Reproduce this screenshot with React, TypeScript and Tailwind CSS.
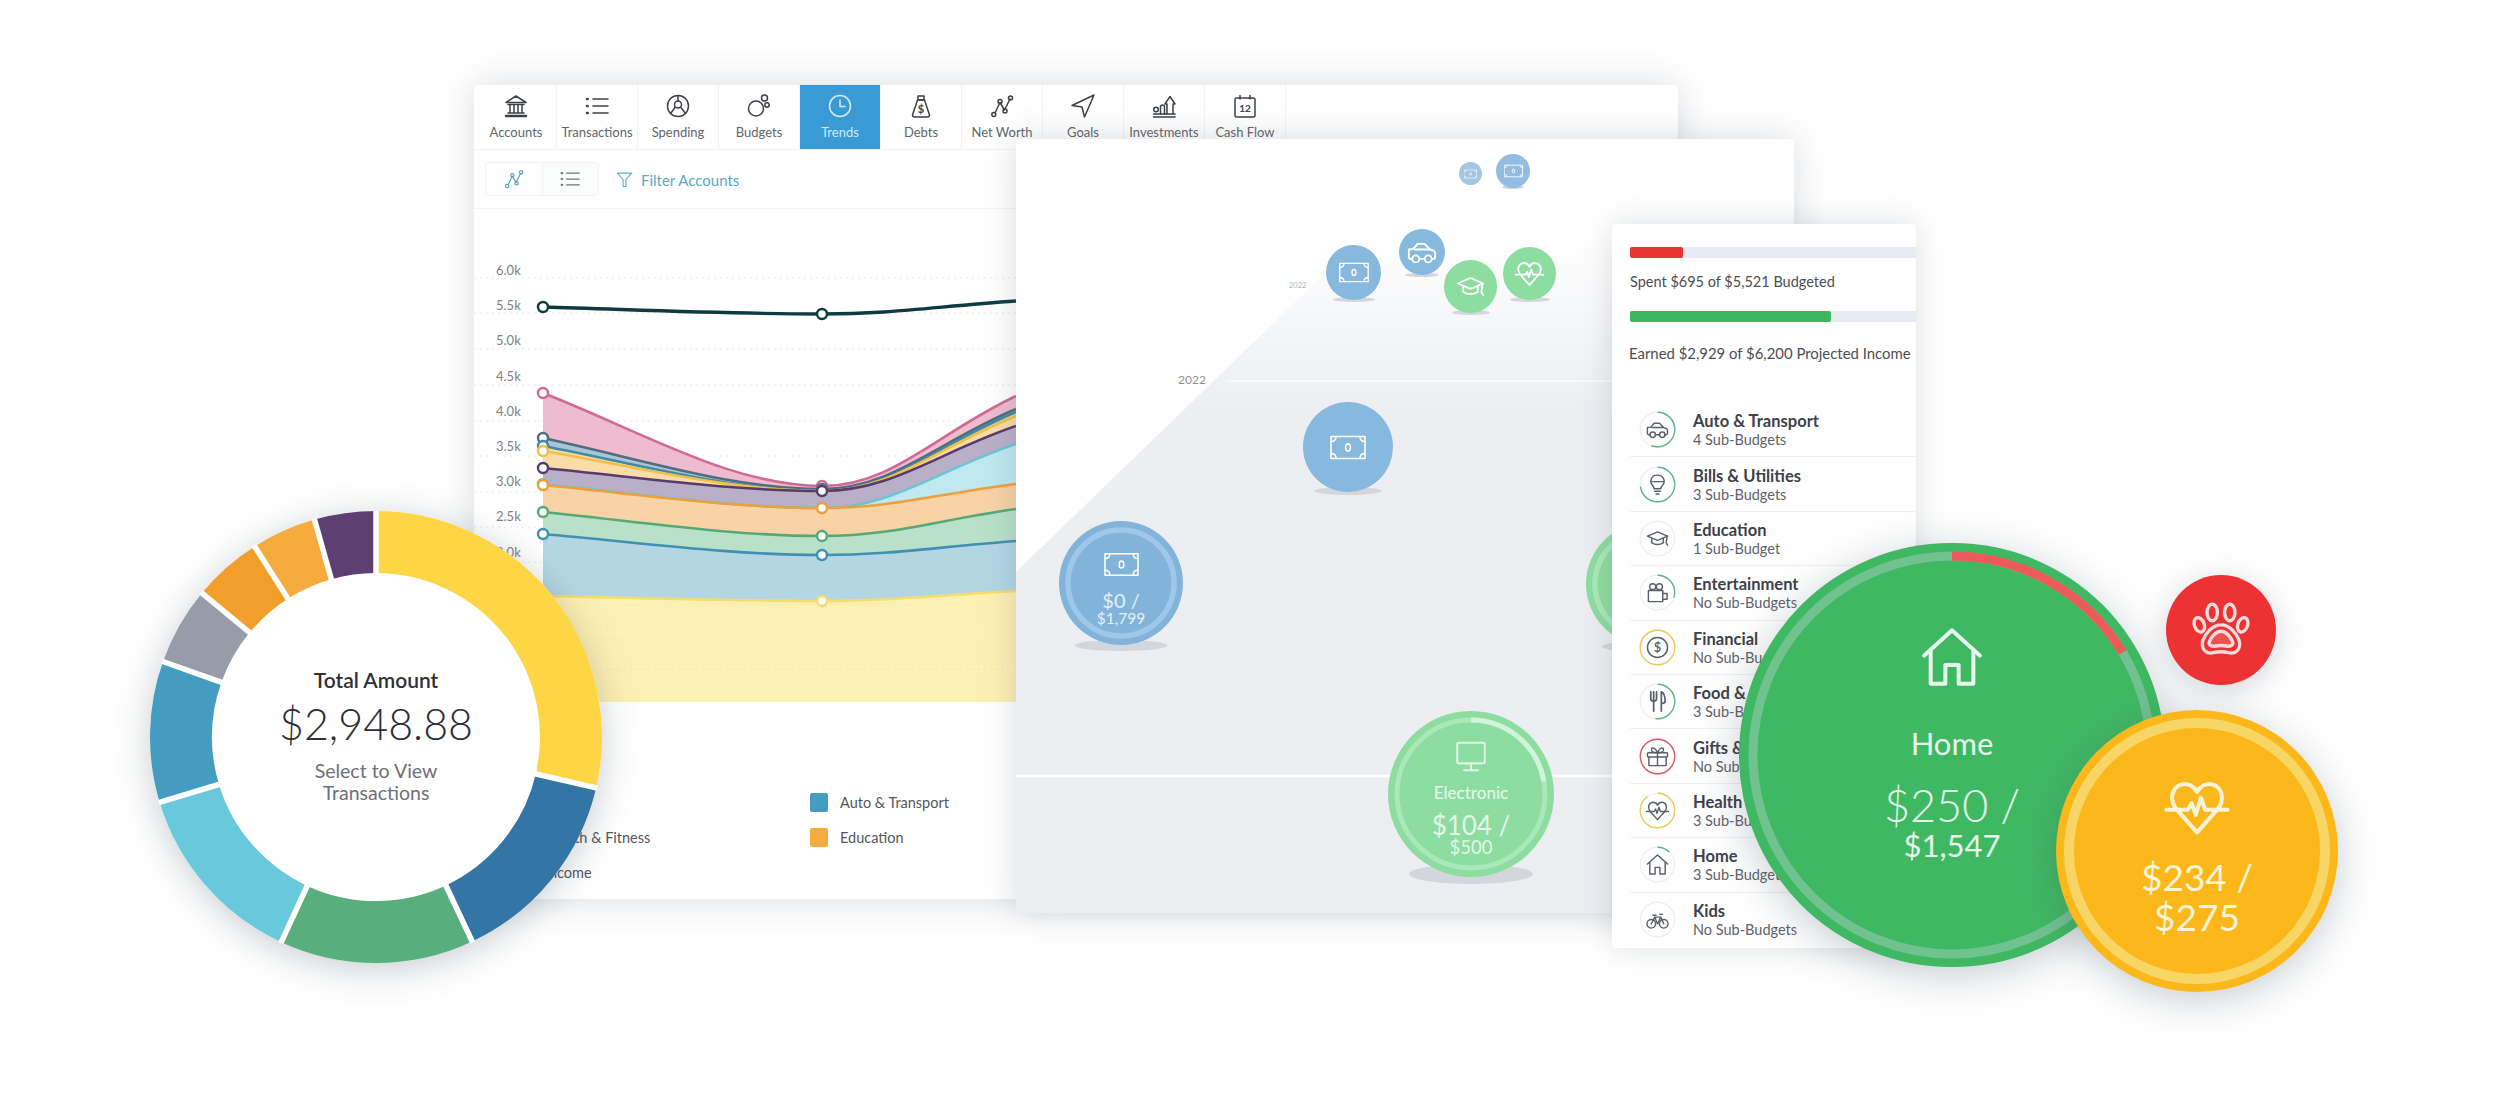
import type { ReactNode } from "react";

type IconProps = { className?: string };

const Svg = ({ className, children, box = "0 0 24 24", sw = 1.5 }: IconProps & { children: ReactNode; box?: string; sw?: number }) => (
  <svg viewBox={box} className={className} fill="none" stroke="currentColor" strokeWidth={sw} strokeLinecap="round" strokeLinejoin="round">
    {children}
  </svg>
);

const BankIcon = (p: IconProps) => (
  <Svg {...p}>
    <path d="M12 2 L22 8.5 H2 Z" />
    <path d="M4 10.5 H20 M6 11 V18.5 M10 11 V18.5 M14 11 V18.5 M18 11 V18.5 M4 19 H20" />
    <path d="M2 22 H22" strokeWidth={2.4} />
  </Svg>
);
const ListIcon = (p: IconProps) => (
  <Svg {...p}>
    <path d="M8 5 H23 M8 12 H23 M8 19 H23" />
    <path d="M2 5 H2.6 M2 12 H2.6 M2 19 H2.6" strokeWidth={2.6} />
  </Svg>
);
const SpendingIcon = (p: IconProps) => (
  <Svg {...p}>
    <circle cx="12" cy="12" r="10.5" />
    <circle cx="12" cy="10.5" r="3.5" />
    <path d="M12 2 V7 M9 13.5 L4.5 19.5 M15 13.5 L19.5 19.5" />
  </Svg>
);
const BudgetsIcon = (p: IconProps) => (
  <Svg {...p}>
    <circle cx="9" cy="14.5" r="7.5" />
    <circle cx="17.5" cy="4" r="3" />
    <circle cx="20" cy="11" r="2.2" />
  </Svg>
);
const ClockIcon = (p: IconProps) => (
  <Svg {...p} sw={1.6}>
    <circle cx="12" cy="12" r="10.5" />
    <path d="M12 6 V12.5 H17" />
  </Svg>
);
const BagIcon = (p: IconProps) => (
  <Svg {...p}>
    <path d="M9 2 H15 V6 H9 Z" />
    <path d="M8.5 6 H15.5 L20.5 21 Q20.5 23 18.5 23 H5.5 Q3.5 23 3.5 21 Z" />
    <text x="12" y="18.5" fontSize="11" fontWeight="700" textAnchor="middle" fill="currentColor" stroke="none">$</text>
  </Svg>
);
const NetWorthIcon = (p: IconProps) => (
  <Svg {...p}>
    <path d="M5 19 L10 8.5 L14.5 16 L20 5" />
    <circle cx="3.8" cy="20.5" r="2" />
    <circle cx="10" cy="7.5" r="2" />
    <circle cx="15" cy="17" r="2" />
    <circle cx="20.5" cy="4" r="2" />
  </Svg>
);
const GoalIcon = (p: IconProps) => (
  <Svg {...p}>
    <path d="M23 1 L1 11.5 L11 13 L13.5 23 Z" />
  </Svg>
);
const InvestIcon = (p: IconProps) => (
  <Svg {...p}>
    <circle cx="4" cy="15.5" r="2.3" />
    <path d="M8.5 20 V13 Q8.5 11 10.5 11 Q12.5 11 12.5 13 V20" />
    <path d="M15 20 V10 H13 L18 2.5 L23 10 H21 V20" />
    <path d="M1.5 23 H23 M1.5 20 H23" />
  </Svg>
);
const CalendarIcon = (p: IconProps) => (
  <Svg {...p}>
    <rect x="2" y="4" width="20" height="19" rx="1.5" />
    <path d="M7 1.5 V5 M17 1.5 V5" />
    <text x="12" y="18" fontSize="10" fontWeight="700" textAnchor="middle" fill="currentColor" stroke="none">12</text>
  </Svg>
);
const FunnelIcon = (p: IconProps) => (
  <Svg {...p}>
    <path d="M2 3 H22 L14 12 V22 H10 V12 Z" />
  </Svg>
);
const CarIcon = (p: IconProps) => (
  <Svg {...p}>
    <path d="M4.2 17.5 H2.5 Q1.5 17.5 1.5 16 V10 L5 9.5 L8.5 5.5 H14 L18.5 10 L21.5 11 Q22.8 11.8 22.5 14 V16 Q22.5 17.5 21 17.5 H19.8" />
    <path d="M9.8 17.5 H14.2 M6 10 H18" />
    <circle cx="7" cy="17.5" r="2.8" />
    <circle cx="17" cy="17.5" r="2.8" />
  </Svg>
);
const BulbIcon = (p: IconProps) => (
  <Svg {...p}>
    <path d="M8.5 16.5 Q8.5 14.5 6.8 12.8 Q4.5 10.5 5.2 7.2 Q6.5 2.2 12 2.2 Q17.5 2.2 18.8 7.2 Q19.5 10.5 17.2 12.8 Q15.5 14.5 15.5 16.5 Z" />
    <path d="M6 9 H18 M9 19 H15 M10.5 22 H13.5" />
  </Svg>
);
const CapIcon = (p: IconProps) => (
  <Svg {...p}>
    <path d="M1.5 9.5 L12 5 L22.5 9.5 L12 14 Z" />
    <path d="M6 12 V16.5 Q12 20 18 16.5 V12" />
    <path d="M22 10 L21 16.5 L22.5 19" />
  </Svg>
);
const CameraIcon = (p: IconProps) => (
  <Svg {...p}>
    <circle cx="7" cy="6" r="3.2" />
    <circle cx="14" cy="6" r="3.2" />
    <rect x="2.5" y="10" width="15" height="11.5" />
    <path d="M17.5 13 H22 V19 H17.5" />
  </Svg>
);
const DollarIcon = (p: IconProps) => (
  <Svg {...p}>
    <circle cx="12" cy="12" r="10.5" />
    <text x="12" y="17" fontSize="13.5" fontWeight="600" textAnchor="middle" fill="currentColor" stroke="none">$</text>
  </Svg>
);
const CutleryIcon = (p: IconProps) => (
  <Svg {...p} sw={1.8}>
    <path d="M5 2 V9 Q5 11.5 8 11.5 Q11 11.5 11 9 V2 M8 2 V22" />
    <path d="M16 22 V2 Q20 3.5 20 12 Q20 14 16.5 14" />
  </Svg>
);
const GiftIcon = (p: IconProps) => (
  <Svg {...p}>
    <rect x="1.5" y="8" width="21" height="4.5" rx="1" />
    <path d="M3 12.5 V21.5 H21 V12.5 M12 8 V21.5" />
    <path d="M12 8 Q4 8 6 3.5 Q9 1.5 12 8 Q15 1.5 18 3.5 Q20 8 12 8" />
  </Svg>
);
const PulseHeartIcon = (p: IconProps) => (
  <Svg {...p}>
    <path d="M12 21.5 L4.6 13.2 C1.4 9.6 2.4 4.8 6 3.6 C8.6 2.8 10.8 4.2 12 6.4 C13.2 4.2 15.4 2.8 18 3.6 C21.6 4.8 22.6 9.6 19.4 13.2 Z" />
    <path d="M0.5 13 H8.5 L10 10.5 L11.5 15 L13.5 8.5 L15 13 H23.5" />
  </Svg>
);
const HouseIcon = (p: IconProps) => (
  <Svg {...p}>
    <path d="M1.5 11.5 L12 2 L22.5 11.5" />
    <path d="M4 10 V22 H9.5 V15 H14.5 V22 H20 V10" />
  </Svg>
);
const BikeIcon = (p: IconProps) => (
  <Svg {...p}>
    <circle cx="5.5" cy="16.5" r="4.5" />
    <circle cx="18.5" cy="16.5" r="4.5" />
    <path d="M5.5 16.5 L9 9.5 H15.5 L18.5 16.5 M9 9.5 L12 16.5 L15.5 9.5 M14.5 6.5 H17 M7.5 7.5 H10.5" />
  </Svg>
);
const MonitorIcon = (p: IconProps) => (
  <Svg {...p}>
    <rect x="2" y="2" width="20" height="15" rx="1" />
    <path d="M12 17 V22 M7 22 H17" />
  </Svg>
);
const MoneyIcon = (p: IconProps) => (
  <Svg {...p} box="0 0 36 24" sw={1.6}>
    <rect x="1" y="1" width="34" height="22" />
    <path d="M1 6 Q6 6 6 1 M30 1 Q30 6 35 6 M1 18 Q6 18 6 23 M30 23 Q30 18 35 18" />
    <ellipse cx="18" cy="12" rx="2.4" ry="3.6" />
  </Svg>
);
const PawIcon = (p: IconProps) => (
  <Svg {...p} sw={1.3}>
    <ellipse cx="8.6" cy="5.2" rx="2" ry="3.2" />
    <ellipse cx="15.4" cy="5.2" rx="2" ry="3.2" />
    <ellipse cx="3.6" cy="10" rx="1.9" ry="2.9" transform="rotate(-20 3.6 10)" />
    <ellipse cx="20.4" cy="10" rx="1.9" ry="2.9" transform="rotate(20 20.4 10)" />
    <path d="M12 10 C15.5 10 18 13.5 19 16 C20 19.5 17.5 21.5 15 20.8 C13 20.3 11 20.3 9 20.8 C6.5 21.5 4 19.5 5 16 C6 13.5 8.5 10 12 10 Z" />
    <path d="M12 12.5 C14 12.5 16 15 16.5 16.5 C17 18 15.5 18.5 14 18.2 Q12 17.8 10 18.2 C8.5 18.5 7 18 7.5 16.5 C8 15 10 12.5 12 12.5 Z" fill="currentColor" fillOpacity={0.18} />
  </Svg>
);

const tabs = [
  { label: "Accounts", Icon: BankIcon },
  { label: "Transactions", Icon: ListIcon },
  { label: "Spending", Icon: SpendingIcon },
  { label: "Budgets", Icon: BudgetsIcon },
  { label: "Trends", Icon: ClockIcon, active: true },
  { label: "Debts", Icon: BagIcon },
  { label: "Net Worth", Icon: NetWorthIcon },
  { label: "Goals", Icon: GoalIcon },
  { label: "Investments", Icon: InvestIcon },
  { label: "Cash Flow", Icon: CalendarIcon },
];

const X1 = 543;
const X2 = 822;
const XE = 1016;
const BOTTOM = 703;

const curve = (a: number, b: number, c: number) =>
  `M${X1} ${a} C${X1 + 100} ${a + (b - a) * 0.42} ${X2 - 90} ${b} ${X2} ${b} C${X2 + 70} ${b} ${XE - 80} ${c + (b - c) * 0.42} ${XE} ${c}`;

const series = [
  { a: 394, b: 487, c: 397, line: "#cf6a94", fill: "#eebbcf" },
  { a: 439, b: 490, c: 410, line: "#4f6d80", fill: "#a9c6d6" },
  { a: 447, b: 492, c: 413, line: "#3f8aa5", fill: "#f9dca7" },
  { a: 452, b: 492, c: 417, line: "#f0c04a", fill: "#f9dca7" },
  { a: 469, b: 492, c: 427, line: "#573a70", fill: "#baafc9" },
  { a: 485, b: 509, c: 445, line: "#6cc4d6", fill: "#bfe8ef" },
  { a: 486, b: 509, c: 485, line: "#ee9f3a", fill: "#f8d3a6" },
  { a: 513, b: 537, c: 510, line: "#57a877", fill: "#b9e0c9" },
  { a: 535, b: 556, c: 542, line: "#3f90b2", fill: "#b4d6e3" },
  { a: 597, b: 602, c: 592, line: "#f6dd6b", fill: "#fdf0b3" },
];

const yLabels = ["6.0k", "5.5k", "5.0k", "4.5k", "4.0k", "3.5k", "3.0k", "2.5k", "2.0k"];

const TrendChart = () => (
  <svg viewBox="474 210 542 493" className="block w-[542px] h-[493px] shrink-0">
    {[279, 314, 350, 386, 422, 457, 493, 528, 563].map((y) => (
      <path key={y} d={`M474 ${y} H1016`} stroke="#eff0f2" strokeWidth="1.5" strokeDasharray="2 4" />
    ))}
    {yLabels.map((t, i) => (
      <text key={t} x="496" y={276 + i * 35.2} fontSize="13" fill="#7d8085">{t}</text>
    ))}
    {series.map((s) => (
      <path key={s.line} d={`${curve(s.a, s.b, s.c)} L${XE} ${BOTTOM} L${X1} ${BOTTOM} Z`} fill={s.fill} />
    ))}
    {[633, 668].map((y) => (
      <path key={y} d={`M${X1} ${y} H1016`} stroke="#fff" strokeOpacity="0.5" strokeWidth="1.5" strokeDasharray="2 4" />
    ))}
    {series.map((s) => (
      <path key={s.line} d={curve(s.a, s.b, s.c)} fill="none" stroke={s.line} strokeWidth="2.6" />
    ))}
    <path d={curve(308, 315, 302)} fill="none" stroke="#0e3a42" strokeWidth="3.4" />
    {series.map((s) => (
      <g key={s.line} fill="#f6fbfb" stroke={s.line} strokeWidth="2.4">
        <circle cx={X1} cy={s.a} r="5" />
        <circle cx={X2} cy={s.b} r="5" />
      </g>
    ))}
    <g fill="#fff" stroke="#0e3a42" strokeWidth="2.4">
      <circle cx={X1} cy="308" r="5" />
      <circle cx={X2} cy="315" r="5" />
    </g>
  </svg>
);

const legend = [
  { label: "Home", color: "bg-[#5d3f72]" },
  { label: "Auto & Transport", color: "bg-[#449dc0]" },
  { label: "Health & Fitness", color: "bg-[#59ae7d]" },
  { label: "Education", color: "bg-[#f6ab3e]" },
  { label: "Income", color: "bg-[#fed545]" },
];

const TrendsWindow = () => (
  <div className="absolute left-[474px] top-[85px] flex h-[814px] w-[1204px] flex-col rounded-sm bg-white shadow-[0_0_34px_rgba(90,105,120,0.24)]">
    <div className="flex h-[65px] shrink-0 border-b border-[#f2f3f5] pl-[2px]">
      {tabs.map(({ label, Icon, active }) => (
        <div
          key={label}
          className={`flex w-[81px] flex-col items-center border-r border-[#f2f3f5] pt-[9px] ${active ? "bg-[#3a9bd4] text-[#cdeaf8]" : "text-[#3d4046]"}`}
        >
          <Icon className="h-[24px] w-[24px]" />
          <span className={`mt-[6px] text-[13px] leading-[16px] ${active ? "" : "text-[#62656b]"}`}>{label}</span>
        </div>
      ))}
    </div>
    <div className="flex h-[59px] shrink-0 items-center border-b border-[#f3f4f6] pl-[11px]">
      <div className="flex h-[34px] w-[114px] rounded-sm border border-[#f1f3f5]">
        <div className="flex w-[57px] items-center justify-center text-[#58a8c0]">
          <NetWorthIcon className="h-[20px] w-[20px]" />
        </div>
        <div className="flex w-[57px] items-center justify-center border-l border-[#f1f3f5] bg-[#fbfcfc] text-[#6d7278]">
          <ListIcon className="h-[20px] w-[20px]" />
        </div>
      </div>
      <FunnelIcon className="ml-[17px] h-[19px] w-[17px] text-[#5aa9c8]" />
      <span className="ml-[8px] pt-[2px] text-[15px] text-[#5aa9c8]">Filter Accounts</span>
    </div>
    <TrendChart />
    <div className="grid grid-cols-[295px_1fr] pl-[41px] pt-[83px]">
      {legend.map((item) => (
        <div key={item.label} className="flex h-[35px] items-center gap-[12px]">
          <span className={`h-[19px] w-[18px] rounded-[2px] ${item.color}`} />
          <span className="text-[14.5px] text-[#53565c]">{item.label}</span>
        </div>
      ))}
    </div>
  </div>
);

type BubbleProps = {
  className: string;
  circle: string;
  ellipse: string;
  children?: ReactNode;
};

const Bubble = ({ className, circle, ellipse, children }: BubbleProps) => (
  <div className={`absolute ${className}`}>
    <div className={`absolute left-1/2 -translate-x-1/2 rounded-[50%] bg-[#d3d6dc] ${ellipse}`} />
    <div className={`absolute inset-0 flex flex-col items-center rounded-full text-white ${circle}`}>{children}</div>
  </div>
);

const Ring = ({ track, width, r, arc, deg, box }: { track: string; width: number; r: number; arc?: string; deg?: number; box: number }) => (
  <svg viewBox={`0 0 ${box} ${box}`} className="absolute inset-0 h-full w-full">
    <circle cx={box / 2} cy={box / 2} r={r} fill="none" stroke={track} strokeWidth={width} />
    {arc && (
      <circle
        cx={box / 2}
        cy={box / 2}
        r={r}
        fill="none"
        stroke={arc}
        strokeWidth={width}
        pathLength={360}
        strokeDasharray={`${deg} 360`}
        transform={`rotate(-90 ${box / 2} ${box / 2})`}
      />
    )}
  </svg>
);

const TimelineWindow = () => (
  <div className="absolute left-[1016px] top-[139px] h-[774px] w-[778px] overflow-hidden rounded-sm bg-white shadow-[0_0_34px_rgba(90,105,120,0.24)]">
    <svg viewBox="1016 139 778 774" className="absolute inset-0 h-full w-full">
      <defs>
        <linearGradient id="wedge" gradientUnits="userSpaceOnUse" x1="0" y1="235" x2="0" y2="410">
          <stop offset="0" stopColor="#ffffff" />
          <stop offset="1" stopColor="#eceef2" />
        </linearGradient>
      </defs>
      <polygon points="1016,572 1464,139 1794,139 1794,913 1016,913" fill="url(#wedge)" />
      <path d="M1226 381 H1794" stroke="#ffffff" strokeWidth="2" opacity="0.6" />
      <path d="M1016 776 H1794" stroke="#ffffff" strokeWidth="2.5" />
    </svg>
    <span className="absolute left-[162px] top-[232px] text-[12px] text-[#8e9196]">2022</span>
    <span className="absolute left-[273px] top-[141px] text-[7.5px] text-[#b4b6ba]">2022</span>

    <Bubble className="left-[443px] top-[23px] h-[23px] w-[23px]" circle="bg-[#a3c6e4] justify-center" ellipse="hidden">
      <MoneyIcon className="h-[10px] w-[13px]" />
    </Bubble>
    <Bubble className="left-[480px] top-[15px] h-[34px] w-[34px]" circle="bg-[#92bce0] justify-center" ellipse="-bottom-[1px] h-[4px] w-[22px]">
      <MoneyIcon className="h-[14px] w-[19px]" />
    </Bubble>
    <Bubble className="left-[310px] top-[106px] h-[55px] w-[55px]" circle="bg-[#87b8dd] justify-center" ellipse="-bottom-[2px] h-[5px] w-[42px]">
      <MoneyIcon className="h-[21px] w-[30px]" />
    </Bubble>
    <Bubble className="left-[383px] top-[90px] h-[46px] w-[46px]" circle="bg-[#87b8dd] justify-center" ellipse="-bottom-[2px] h-[4px] w-[34px]">
      <CarIcon className="h-[30px] w-[30px]" />
    </Bubble>
    <Bubble className="left-[428px] top-[121px] h-[53px] w-[53px]" circle="bg-[#8ddca0] justify-center" ellipse="-bottom-[2px] h-[5px] w-[38px]">
      <CapIcon className="h-[29px] w-[29px]" />
    </Bubble>
    <Bubble className="left-[487px] top-[108px] h-[53px] w-[53px]" circle="bg-[#8ddca0] justify-center" ellipse="-bottom-[2px] h-[5px] w-[40px]">
      <PulseHeartIcon className="h-[29px] w-[29px]" />
    </Bubble>
    <Bubble className="left-[287px] top-[263px] h-[90px] w-[90px]" circle="bg-[#87b8dd] justify-center" ellipse="-bottom-[3px] h-[8px] w-[68px]">
      <MoneyIcon className="h-[25px] w-[36px]" />
    </Bubble>
    <Bubble className="left-[43px] top-[382px] h-[124px] w-[124px]" circle="bg-[#82b4da] pt-[31px]" ellipse="-bottom-[6px] h-[11px] w-[93px]">
      <Ring box={124} track="#9fc7e9" width={5.5} r={53} />
      <MoneyIcon className="relative h-[25px] w-[35px]" />
      <span className="relative mt-[13px] text-[20px] leading-[20px] text-[#e3f0fa]">$0 /</span>
      <span className="relative text-[15.5px] leading-[16px] text-[#e3f0fa]">$1,799</span>
    </Bubble>
    <Bubble className="left-[570px] top-[383px] h-[124px] w-[124px]" circle="bg-[#8ddca0]" ellipse="-bottom-[6px] h-[11px] w-[93px]">
      <Ring box={124} track="#a9e8b8" width={5.5} r={53} />
    </Bubble>
    <Bubble className="left-[372px] top-[572px] h-[166px] w-[166px]" circle="bg-[#8ddca0] pt-[29px]" ellipse="-bottom-[7px] h-[20px] w-[124px]">
      <Ring box={166} track="#a9e8b8" width={5} r={74} arc="#cff4d8" deg={80} />
      <MonitorIcon className="relative h-[33px] w-[36px] text-[#dff7e5]" />
      <span className="relative mt-[9px] text-[17px] font-medium leading-[22px] text-[#e3f8e9]">Electronic</span>
      <span className="relative mt-[8px] text-[26px] leading-[26px] text-[#e3f8e9]">$104 /</span>
      <span className="relative text-[18.5px] leading-[19px] text-[#e3f8e9]">$500</span>
    </Bubble>
  </div>
);

const budgets = [
  { title: "Auto & Transport", sub: "4 Sub-Budgets", Icon: CarIcon, pct: 56, color: "#5cb585" },
  { title: "Bills & Utilities", sub: "3 Sub-Budgets", Icon: BulbIcon, pct: 73, color: "#5cb585" },
  { title: "Education", sub: "1 Sub-Budget", Icon: CapIcon, pct: 0, color: "#5cb585" },
  { title: "Entertainment", sub: "No Sub-Budgets", Icon: CameraIcon, pct: 30, color: "#5cb585" },
  { title: "Financial", sub: "No Sub-Budgets", Icon: DollarIcon, pct: 100, color: "#eccb57" },
  { title: "Food & Dining", sub: "3 Sub-Budgets", Icon: CutleryIcon, pct: 52, color: "#5cb585" },
  { title: "Gifts & Donations", sub: "No Sub-Budgets", Icon: GiftIcon, pct: 100, color: "#d9575f" },
  { title: "Health & Fitness", sub: "3 Sub-Budgets", Icon: PulseHeartIcon, pct: 90, color: "#eccb57" },
  { title: "Home", sub: "3 Sub-Budgets", Icon: HouseIcon, pct: 12, color: "#5cb585" },
  { title: "Kids", sub: "No Sub-Budgets", Icon: BikeIcon, pct: 0, color: "#5cb585" },
];

const BudgetsWindow = () => (
  <div className="absolute left-[1612px] top-[224px] h-[724px] w-[304px] overflow-hidden rounded-sm bg-white pt-[23px] text-[#4b4e54] shadow-[0_0_30px_rgba(90,105,120,0.22)]">
    <div className="ml-[18px] h-[11px] bg-[#e8ebf3]">
      <div className="h-full w-[53px] rounded-[2px] bg-[#ea3434]" />
    </div>
    <p className="ml-[18px] mt-[14px] text-[14.5px] leading-[20px]">Spent $695 of $5,521 Budgeted</p>
    <div className="ml-[18px] mt-[19px] h-[11px] bg-[#e8ebf3]">
      <div className="h-full w-[201px] rounded-[2px] bg-[#3eb65f]" />
    </div>
    <p className="ml-[17px] mt-[21px] whitespace-nowrap text-[14.9px] leading-[20px]">Earned $2,929 of $6,200 Projected Income</p>
    <div className="mt-[40px]">
      {budgets.map(({ title, sub, Icon, pct, color }, i) => (
        <div
          key={title}
          className={`ml-[18px] flex h-[54.4px] items-center pl-[9px] ${i < budgets.length - 1 ? "border-b border-[#f0f1f3]" : ""}`}
        >
          <div className="relative flex h-[37px] w-[37px] shrink-0 items-center justify-center text-[#5a6068]">
            <svg viewBox="0 0 38 38" className="absolute inset-0 h-full w-full">
              <circle cx="19" cy="19" r="17.7" fill="none" stroke="#eef0f2" strokeWidth="1.4" />
              {pct > 0 && (
                <circle
                  cx="19"
                  cy="19"
                  r="17.7"
                  fill="none"
                  stroke={color}
                  strokeWidth="1.4"
                  pathLength={100}
                  strokeDasharray={`${pct} 100`}
                  transform="rotate(-90 19 19)"
                />
              )}
            </svg>
            <Icon className="h-[23px] w-[23px]" />
          </div>
          <div className="ml-[17px] min-w-0 pt-[2px]">
            <div className="whitespace-nowrap text-[16.5px] font-bold leading-[19px] text-[#3d4148]">{title}</div>
            <div className="whitespace-nowrap text-[14.5px] leading-[18px] text-[#5e6269]">{sub}</div>
          </div>
        </div>
      ))}
    </div>
  </div>
);

const segments = [
  { from: 0, to: 103, color: "#fed545" },
  { from: 103, to: 154.8, color: "#3376a5" },
  { from: 154.8, to: 204.8, color: "#59ae7d" },
  { from: 204.8, to: 253.2, color: "#69c9dc" },
  { from: 253.2, to: 289.5, color: "#449dc0" },
  { from: 289.5, to: 309.6, color: "#979ca8" },
  { from: 309.6, to: 327.5, color: "#f19e2b" },
  { from: 327.5, to: 344.2, color: "#f6ab3e" },
  { from: 344.2, to: 360, color: "#5d3f72" },
];

const polar = (r: number, deg: number) => {
  const rad = (deg * Math.PI) / 180;
  return `${226 + r * Math.sin(rad)} ${226 - r * Math.cos(rad)}`;
};

const Donut = () => (
  <div className="absolute left-[150px] top-[511px] flex h-[452px] w-[452px] flex-col items-center rounded-full bg-white pt-[156px] shadow-[0_6px_36px_rgba(70,85,100,0.3)]">
    <svg viewBox="0 0 452 452" className="absolute inset-0 h-full w-full">
      {segments.map((s) => (
        <path
          key={s.color}
          d={`M${polar(195, s.from)} A195 195 0 ${s.to - s.from > 180 ? 1 : 0} 1 ${polar(195, s.to)}`}
          fill="none"
          stroke={s.color}
          strokeWidth="62"
        />
      ))}
      {segments.map((s) => (
        <path key={s.color} d={`M${polar(160, s.from)} L${polar(227, s.from)}`} stroke="#ffffff" strokeWidth="5.5" />
      ))}
    </svg>
    <span className="relative text-[21px] font-semibold leading-[26px] text-[#2f3136]">Total Amount</span>
    <span className="relative mt-[7px] text-[43px] font-light leading-[48px] text-[#2c2e33]">$2,948.88</span>
    <span className="relative mt-[12px] text-center text-[19.5px] leading-[22px] text-[#6d7178]">
      Select to View
      <br />
      Transactions
    </span>
  </div>
);

const HomeBubble = () => (
  <div className="absolute left-[1739px] top-[543px] flex h-[424px] w-[426px] flex-col items-center rounded-full bg-[#3fb863] pt-[82px] text-[#e6f7ec] shadow-[0_8px_44px_rgba(70,85,100,0.3)]">
    <Ring box={424} track="#70c28f" width={9} r={199} arc="#ec5a5a" deg={59} />
    <HouseIcon className="relative h-[64px] w-[76px]" />
    <span className="relative mt-[34px] text-[31px] leading-[40px]">Home</span>
    <span className="relative mt-[19px] text-[45px] font-light leading-[46px]">$250 /</span>
    <span className="relative text-[31px] leading-[34px]">$1,547</span>
  </div>
);

const FitnessBubble = () => (
  <div className="absolute left-[2056px] top-[710px] flex h-[282px] w-[282px] flex-col items-center rounded-full bg-[#fcb81a] pt-[65px] text-[#fdf3d6] shadow-[0_8px_40px_rgba(70,85,100,0.3)]">
    <Ring box={282} track="#f7d666" width={10} r={128} />
    <PulseHeartIcon className="relative h-[64px] w-[84px]" />
    <span className="relative mt-[18px] text-[37px] leading-[40px]">$234 /</span>
    <span className="relative text-[37px] leading-[40px]">$275</span>
  </div>
);

const PawBubble = () => (
  <div className="absolute left-[2166px] top-[575px] flex h-[110px] w-[110px] items-center justify-center rounded-full bg-[#ec3232] text-[#fbdcdc] shadow-[0_6px_30px_rgba(70,85,100,0.25)]">
    <PawIcon className="h-[62px] w-[64px]" />
  </div>
);

export default function App() {
  return (
    <div className="relative h-[1099px] w-[2499px] overflow-hidden bg-white font-['Lato','Noto_Sans',sans-serif]">
      <TrendsWindow />
      <TimelineWindow />
      <BudgetsWindow />
      <Donut />
      <HomeBubble />
      <PawBubble />
      <FitnessBubble />
    </div>
  );
}
